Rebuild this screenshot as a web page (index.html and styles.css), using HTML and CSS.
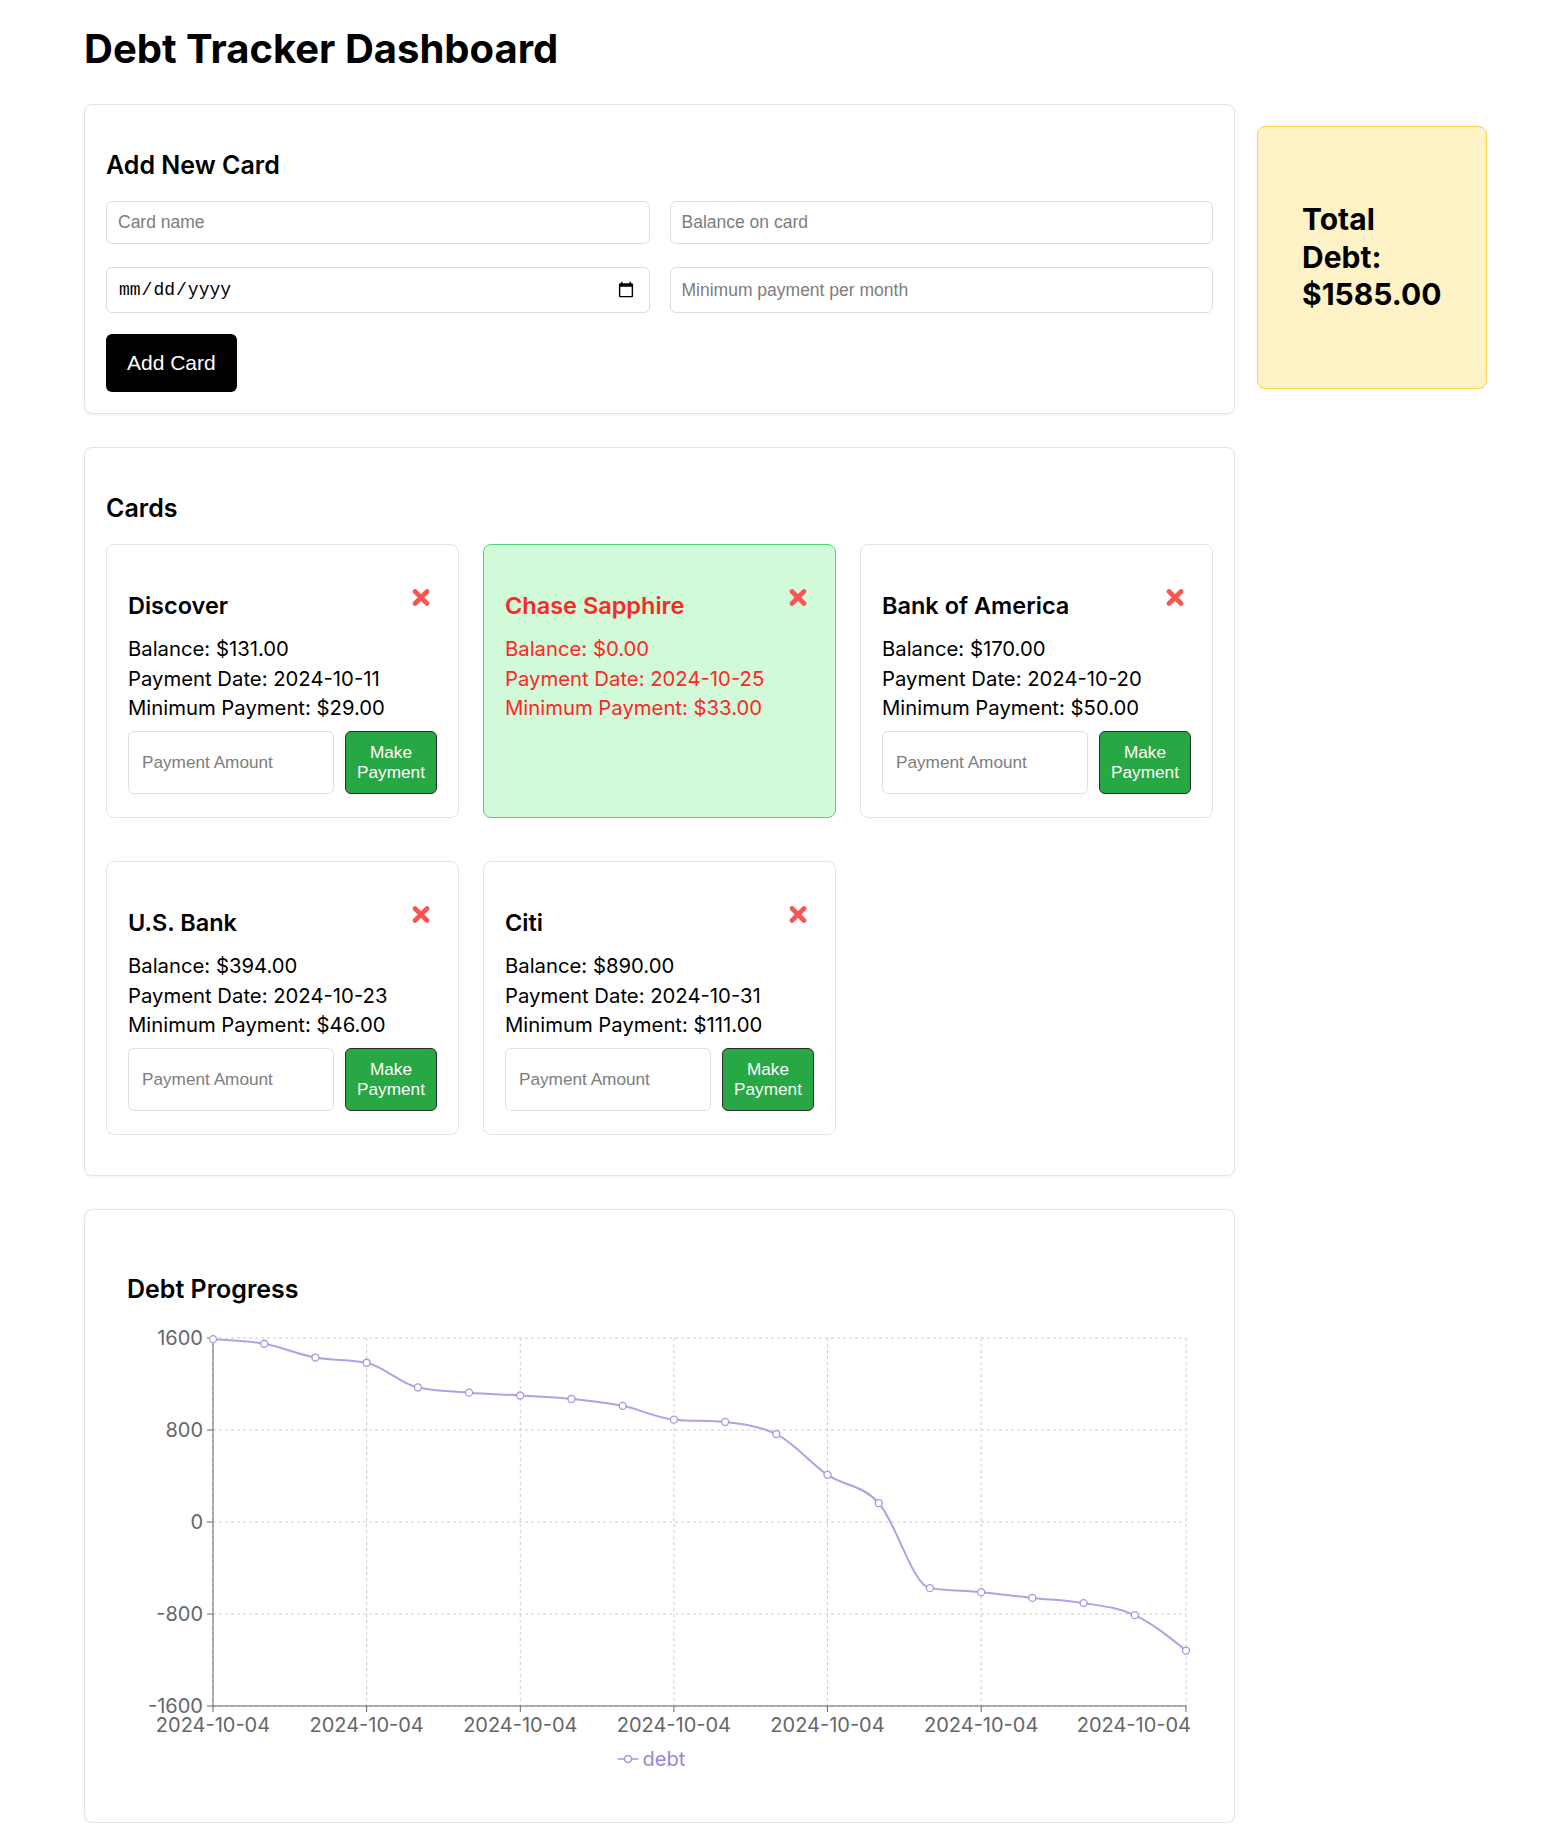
FILE: index.html
```html
<!DOCTYPE html>
<html lang="en">
<head>
<meta charset="utf-8">
<title>Debt Tracker Dashboard</title>
<link rel="stylesheet" href="styles.css">
</head>
<body>
<div class="page">
  <h1 class="title">Debt Tracker Dashboard</h1>
  <div class="layout">
    <main class="main">
      <section class="panel">
        <h2 class="panel-title">Add New Card</h2>
        <div class="form-grid">
          <input class="field" type="text" placeholder="Card name">
          <input class="field" type="text" placeholder="Balance on card">
          <input class="field field-tall field-date" type="date">
          <input class="field field-tall" type="text" placeholder="Minimum payment per month">
        </div>
        <button class="btn-add">Add Card</button>
      </section>

      <section class="panel">
        <h2 class="panel-title">Cards</h2>
        <div class="card-grid">
          <div class="card">
            <div class="card-head">
              <h3 class="card-name">Discover</h3>
              <button class="remove-btn" aria-label="Remove card"><svg class="x-icon" viewBox="0 0 18 17" width="18" height="17"><path d="M3 2.5 L15 14.5 M15 2.5 L3 14.5" /></svg></button>
            </div>
            <p class="card-line">Balance: $131.00</p>
            <p class="card-line">Payment Date: 2024-10-11</p>
            <p class="card-line">Minimum Payment: $29.00</p>
            <div class="pay-row">
              <input class="pay-input" type="text" placeholder="Payment Amount">
              <button class="pay-btn">Make Payment</button>
            </div>
          </div>

          <div class="card card-paid">
            <div class="card-head">
              <h3 class="card-name">Chase Sapphire</h3>
              <button class="remove-btn" aria-label="Remove card"><svg class="x-icon" viewBox="0 0 18 17" width="18" height="17"><path d="M3 2.5 L15 14.5 M15 2.5 L3 14.5" /></svg></button>
            </div>
            <p class="card-line">Balance: $0.00</p>
            <p class="card-line">Payment Date: 2024-10-25</p>
            <p class="card-line">Minimum Payment: $33.00</p>
          </div>

          <div class="card">
            <div class="card-head">
              <h3 class="card-name">Bank of America</h3>
              <button class="remove-btn" aria-label="Remove card"><svg class="x-icon" viewBox="0 0 18 17" width="18" height="17"><path d="M3 2.5 L15 14.5 M15 2.5 L3 14.5" /></svg></button>
            </div>
            <p class="card-line">Balance: $170.00</p>
            <p class="card-line">Payment Date: 2024-10-20</p>
            <p class="card-line">Minimum Payment: $50.00</p>
            <div class="pay-row">
              <input class="pay-input" type="text" placeholder="Payment Amount">
              <button class="pay-btn">Make Payment</button>
            </div>
          </div>

          <div class="card">
            <div class="card-head">
              <h3 class="card-name">U.S. Bank</h3>
              <button class="remove-btn" aria-label="Remove card"><svg class="x-icon" viewBox="0 0 18 17" width="18" height="17"><path d="M3 2.5 L15 14.5 M15 2.5 L3 14.5" /></svg></button>
            </div>
            <p class="card-line">Balance: $394.00</p>
            <p class="card-line">Payment Date: 2024-10-23</p>
            <p class="card-line">Minimum Payment: $46.00</p>
            <div class="pay-row">
              <input class="pay-input" type="text" placeholder="Payment Amount">
              <button class="pay-btn">Make Payment</button>
            </div>
          </div>

          <div class="card">
            <div class="card-head">
              <h3 class="card-name">Citi</h3>
              <button class="remove-btn" aria-label="Remove card"><svg class="x-icon" viewBox="0 0 18 17" width="18" height="17"><path d="M3 2.5 L15 14.5 M15 2.5 L3 14.5" /></svg></button>
            </div>
            <p class="card-line">Balance: $890.00</p>
            <p class="card-line">Payment Date: 2024-10-31</p>
            <p class="card-line">Minimum Payment: $111.00</p>
            <div class="pay-row">
              <input class="pay-input" type="text" placeholder="Payment Amount">
              <button class="pay-btn">Make Payment</button>
            </div>
          </div>
        </div>
      </section>

      <section class="panel">
        <div class="chart-inner">
          <h2 class="panel-title panel-title-chart">Debt Progress</h2>
          <svg class="chart" width="1065" height="456" viewBox="0 0 1065 456">
            <g class="grid">
              <line x1="86" y1="14" x2="1059" y2="14"/>
              <line x1="86" y1="106" x2="1059" y2="106"/>
              <line x1="86" y1="198" x2="1059" y2="198"/>
              <line x1="86" y1="290" x2="1059" y2="290"/>
              <line x1="86" y1="382" x2="1059" y2="382"/>
              <line x1="86" y1="14" x2="86" y2="382"/>
              <line x1="239.6" y1="14" x2="239.6" y2="382"/>
              <line x1="393.3" y1="14" x2="393.3" y2="382"/>
              <line x1="546.9" y1="14" x2="546.9" y2="382"/>
              <line x1="700.5" y1="14" x2="700.5" y2="382"/>
              <line x1="854.2" y1="14" x2="854.2" y2="382"/>
              <line x1="1059" y1="14" x2="1059" y2="382"/>
            </g>
            <g class="axis">
              <line x1="86" y1="14" x2="86" y2="382"/>
              <line x1="80" y1="14" x2="86" y2="14"/>
              <line x1="80" y1="106" x2="86" y2="106"/>
              <line x1="80" y1="198" x2="86" y2="198"/>
              <line x1="80" y1="290" x2="86" y2="290"/>
              <line x1="80" y1="382" x2="86" y2="382"/>
              <line x1="86" y1="382" x2="1059" y2="382"/>
              <line x1="86" y1="382" x2="86" y2="388"/>
              <line x1="239.6" y1="382" x2="239.6" y2="388"/>
              <line x1="393.3" y1="382" x2="393.3" y2="388"/>
              <line x1="546.9" y1="382" x2="546.9" y2="388"/>
              <line x1="700.5" y1="382" x2="700.5" y2="388"/>
              <line x1="854.2" y1="382" x2="854.2" y2="388"/>
              <line x1="1059" y1="382" x2="1059" y2="388"/>
            </g>
            <g class="tick-labels y-labels">
              <text x="76" y="21">1600</text>
              <text x="76" y="113">800</text>
              <text x="76" y="205">0</text>
              <text x="76" y="297">-800</text>
              <text x="76" y="389">-1600</text>
            </g>
            <g class="tick-labels x-labels">
              <text x="86" y="407.5">2024-10-04</text>
              <text x="239.6" y="407.5">2024-10-04</text>
              <text x="393.3" y="407.5">2024-10-04</text>
              <text x="546.9" y="407.5">2024-10-04</text>
              <text x="700.5" y="407.5">2024-10-04</text>
              <text x="854.2" y="407.5">2024-10-04</text>
              <text class="x-last" x="1064" y="407.5">2024-10-04</text>
            </g>
            <path id="debt-line" class="series-line" d=""/>
            <g id="debt-dots" class="series-dots"></g>
            <g class="legend">
              <line x1="490.5" y1="435" x2="511.5" y2="435"/>
              <circle cx="501" cy="435" r="3.5"/>
              <text x="515.5" y="442">debt</text>
            </g>
          </svg>
        </div>
      </section>
    </main>

    <aside class="total-box">
      <h2 class="total-text">Total Debt: $1585.00</h2>
    </aside>
  </div>
</div>
<script src="script.js"></script>
</body>
</html>
```

FILE: styles.css
```css
* { box-sizing: border-box; }

body {
  margin: 0;
  background: #ffffff;
  color: #000000;
  font-family: Inter, "Noto Sans", sans-serif;
}

.page {
  padding: 25px 0 0 84px;
}

.title {
  margin: 0;
  font-size: 40px;
  line-height: 48px;
  font-weight: 700;
}

.layout {
  display: flex;
  align-items: flex-start;
  gap: 22px;
  margin-top: 31px;
}

.main {
  width: 1151px;
  display: flex;
  flex-direction: column;
  gap: 33px;
}

.panel {
  background: #ffffff;
  border: 1px solid #e4e4e7;
  border-radius: 8px;
  padding: 22px 21px 21px;
  box-shadow: 0 1px 3px rgba(0, 0, 0, 0.06);
}

.panel-title {
  margin: 23px 0 21px;
  font-size: 25px;
  line-height: 30px;
  font-weight: 600;
}

.panel-title-chart {
  margin: 21px 0 20px;
}

.form-grid {
  display: grid;
  grid-template-columns: minmax(0, 1fr) minmax(0, 1fr);
  column-gap: 20px;
  row-gap: 23px;
}

.field {
  width: 100%;
  height: 43px;
  border: 1px solid #dcdcdc;
  border-radius: 6px;
  padding: 0 11px;
  font-family: "Liberation Sans", Arial, sans-serif;
  font-size: 17.5px;
  color: #000;
  background: #fff;
}

.field::placeholder,
.pay-input::placeholder {
  color: #7d7d7d;
}

.field-tall {
  height: 46px;
}

.field-date {
  font-family: "Liberation Mono", monospace;
  font-size: 18px;
  padding-right: 12px;
}

.btn-add {
  display: block;
  margin-top: 21px;
  height: 58px;
  padding: 0 21px;
  background: #000000;
  color: #ffffff;
  border: none;
  border-radius: 6px;
  font-family: "Liberation Sans", Arial, sans-serif;
  font-size: 21px;
}

.card-grid {
  display: grid;
  grid-template-columns: repeat(3, minmax(0, 1fr));
  gap: 24px;
}

.card {
  display: flex;
  flex-direction: column;
  min-width: 0;
  background: #ffffff;
  border: 1px solid #e4e4e7;
  border-radius: 8px;
  padding: 21px 21px 23.5px;
  margin-bottom: 19px;
}

.card-paid {
  background: #d1fad8;
  border-color: #4fd67a;
  color: #ff2626;
}

.card-head {
  display: flex;
  justify-content: space-between;
  align-items: flex-start;
}

.card-name {
  margin: 26px 0 14px;
  font-size: 23.5px;
  line-height: 28px;
  font-weight: 600;
}

.remove-btn {
  margin: 23px 7px 0 0;
  padding: 0;
  border: none;
  background: none;
  line-height: 0;
}

.x-icon path {
  fill: none;
  stroke: #fb5454;
  stroke-width: 4.6;
  stroke-linecap: round;
}

.card-line {
  margin: 0;
  font-size: 20.3px;
  line-height: 29.5px;
}

.pay-row {
  display: flex;
  gap: 11px;
  margin-top: 8px;
}

.pay-input {
  flex: 1 1 0;
  width: 0;
  min-width: 0;
  height: 63px;
  border: 1px solid #e0e0e0;
  border-radius: 6px;
  padding: 0 13px;
  font-family: "Liberation Sans", Arial, sans-serif;
  font-size: 17.2px;
  background: #fff;
}

.pay-btn {
  flex: 0 0 92px;
  width: 92px;
  height: 63px;
  padding: 0 8px;
  background: #28a745;
  color: #ffffff;
  border: 1.5px solid #2b2b2b;
  border-radius: 6px;
  font-family: "Liberation Sans", Arial, sans-serif;
  font-size: 17.2px;
  line-height: 20px;
}

.total-box {
  width: 230px;
  height: 263px;
  margin-top: 22px;
  display: flex;
  align-items: center;
  padding: 0 20px 0 44px;
  background: #fef3c7;
  border: 1.5px solid #fcd34d;
  border-radius: 8px;
}

.total-text {
  margin: 0;
  width: min-content;
  font-size: 30px;
  line-height: 37.5px;
  font-weight: 700;
}

.chart-inner {
  padding: 21px;
}

.chart {
  display: block;
  font-family: Inter, "Noto Sans", sans-serif;
  font-size: 20px;
}

.grid line {
  stroke: #cccccc;
  stroke-width: 1;
  stroke-dasharray: 3 3;
}

.axis line {
  stroke: #666666;
  stroke-width: 1;
}

.tick-labels text {
  fill: #666666;
}

.y-labels text {
  text-anchor: end;
}

.x-labels text {
  text-anchor: middle;
}

.x-labels .x-last {
  text-anchor: end;
}

.series-line {
  fill: none;
  stroke: #a9a5e6;
  stroke-width: 2;
}

.series-dots circle {
  fill: #ffffff;
  stroke: #9d99e2;
  stroke-width: 1.3;
}

.legend line {
  stroke: #9d99e2;
  stroke-width: 1.5;
}

.legend circle {
  fill: #ffffff;
  stroke: #9d99e2;
  stroke-width: 1.5;
}

.legend text {
  fill: #8e8ad9;
}
```

FILE: script.js
```js
(function () {
  var data = [1590, 1550, 1430, 1385, 1170, 1125, 1100, 1070, 1010, 890,
              870, 765, 410, 165, -575, -610, -660, -705, -810, -1118];
  var x0 = 86, step = 973 / 19, yTop = 14, scale = 368 / 3200;
  var pts = data.map(function (v, i) {
    return [x0 + i * step, yTop + (1600 - v) * scale];
  });

  function sgn(x) { return x < 0 ? -1 : 1; }
  var n = pts.length, s = [], t = [];
  for (var i = 0; i < n - 1; i++) {
    s.push((pts[i + 1][1] - pts[i][1]) / (pts[i + 1][0] - pts[i][0]));
  }
  for (i = 1; i < n - 1; i++) {
    var h0 = pts[i][0] - pts[i - 1][0], h1 = pts[i + 1][0] - pts[i][0];
    var s0 = s[i - 1], s1 = s[i];
    var p = (s0 * h1 + s1 * h0) / (h0 + h1);
    t[i] = (sgn(s0) + sgn(s1)) * Math.min(Math.abs(s0), Math.abs(s1), 0.5 * Math.abs(p)) || 0;
  }
  t[0] = (3 * s[0] - t[1]) / 2;
  t[n - 1] = (3 * s[n - 2] - t[n - 2]) / 2;

  var d = 'M' + pts[0][0].toFixed(2) + ',' + pts[0][1].toFixed(2);
  for (i = 0; i < n - 1; i++) {
    var a = pts[i], b = pts[i + 1], dx = (b[0] - a[0]) / 3;
    d += 'C' + (a[0] + dx).toFixed(2) + ',' + (a[1] + dx * t[i]).toFixed(2) + ' ' +
         (b[0] - dx).toFixed(2) + ',' + (b[1] - dx * t[i + 1]).toFixed(2) + ' ' +
         b[0].toFixed(2) + ',' + b[1].toFixed(2);
  }
  document.getElementById('debt-line').setAttribute('d', d);

  var ns = 'http://www.w3.org/2000/svg';
  var g = document.getElementById('debt-dots');
  pts.forEach(function (pt) {
    var c = document.createElementNS(ns, 'circle');
    c.setAttribute('cx', pt[0].toFixed(2));
    c.setAttribute('cy', pt[1].toFixed(2));
    c.setAttribute('r', '3.5');
    g.appendChild(c);
  });
})();
```
